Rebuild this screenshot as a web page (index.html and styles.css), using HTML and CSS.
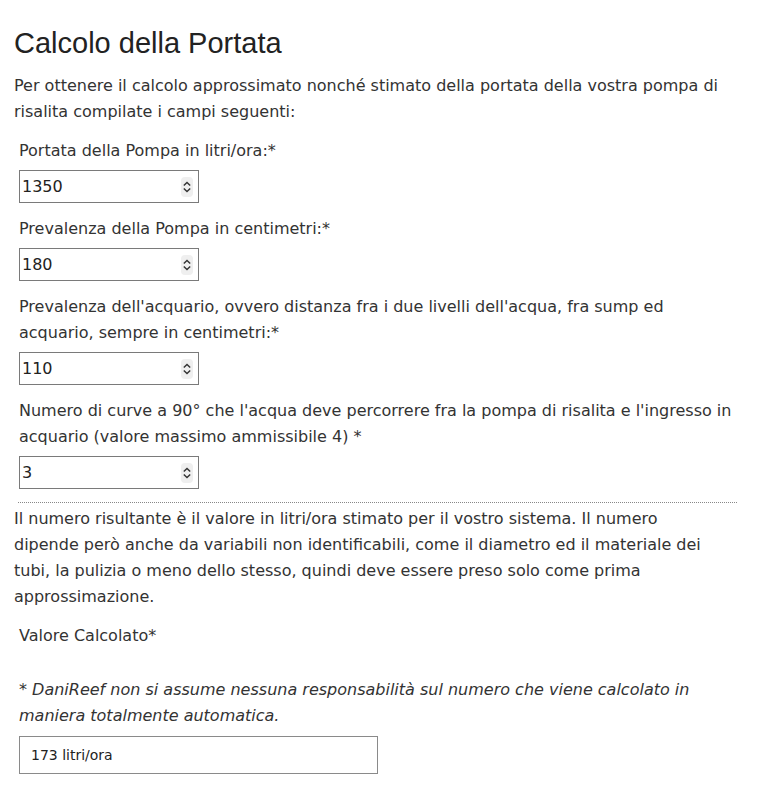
FILE: index.html
```html
<html>

<head>
	<title>Calcolo della Portata</title>
	<link rel="stylesheet" href="styles.css">
</head>

<body>
	<main class="page">
		<h1>Calcolo della Portata</h1>

		<p>Per ottenere il calcolo approssimato nonché stimato della portata della vostra pompa di risalita compilate i campi seguenti:</p>

		<form class="calc">
			<div class="group">
				<label for="Portata">Portata della Pompa in litri/ora:*</label>
				<div class="field">
					<input id="Portata" type="text" value="1350">
					<svg class="spin" width="12" height="20" viewBox="0 0 12 20"><rect width="12" height="20" rx="4" fill="#efefef"/><path d="M2.8 8.6 L6 5.4 L9.2 8.6 M2.8 11.4 L6 14.6 L9.2 11.4" fill="none" stroke="#333" stroke-width="1.4"/></svg>
				</div>
			</div>
			<div class="group">
				<label for="Prevalenza">Prevalenza della Pompa in centimetri:*</label>
				<div class="field">
					<input id="Prevalenza" type="text" value="180">
					<svg class="spin" width="12" height="20" viewBox="0 0 12 20"><rect width="12" height="20" rx="4" fill="#efefef"/><path d="M2.8 8.6 L6 5.4 L9.2 8.6 M2.8 11.4 L6 14.6 L9.2 11.4" fill="none" stroke="#333" stroke-width="1.4"/></svg>
				</div>
			</div>
			<div class="group">
				<label for="Acquario">Prevalenza dell'acquario, ovvero distanza fra i due livelli dell'acqua, fra sump ed acquario, sempre in centimetri:*</label>
				<div class="field">
					<input id="Acquario" type="text" value="110">
					<svg class="spin" width="12" height="20" viewBox="0 0 12 20"><rect width="12" height="20" rx="4" fill="#efefef"/><path d="M2.8 8.6 L6 5.4 L9.2 8.6 M2.8 11.4 L6 14.6 L9.2 11.4" fill="none" stroke="#333" stroke-width="1.4"/></svg>
				</div>
			</div>
			<div class="group">
				<label for="Curve">Numero di curve a 90° che l'acqua deve percorrere fra la pompa di risalita e l'ingresso in acquario (valore massimo ammissibile 4) *</label>
				<div class="field">
					<input id="Curve" type="text" value="3">
					<svg class="spin" width="12" height="20" viewBox="0 0 12 20"><rect width="12" height="20" rx="4" fill="#efefef"/><path d="M2.8 8.6 L6 5.4 L9.2 8.6 M2.8 11.4 L6 14.6 L9.2 11.4" fill="none" stroke="#333" stroke-width="1.4"/></svg>
				</div>
			</div>
			<hr>
		</form>

		<p class="note">Il numero risultante è il valore in litri/ora stimato per il vostro sistema. Il numero dipende però anche da variabili non identificabili, come il diametro ed il materiale dei tubi, la pulizia o meno dello stesso, quindi deve essere preso solo come prima approssimazione.</p>

		<div class="result">
			<p class="result-label">Valore Calcolato*</p>
			<p class="disclaimer">* DaniReef non si assume nessuna responsabilità sul numero che viene calcolato in maniera totalmente automatica.</p>
			<div class="output">173 litri/ora</div>
		</div>
	</main>
</body>

</html>
```

FILE: styles.css
```css
* {
	box-sizing: border-box;
}

body {
	margin: 0;
	background: #fff;
	font-family: "DejaVu Sans", Verdana, sans-serif;
	font-size: 16px;
	line-height: 26px;
	color: #333;
}

.page {
	width: 742px;
	padding: 27px 0 0 14px;
}

h1 {
	font-family: "Liberation Sans", Arial, sans-serif;
	font-weight: normal;
	font-size: 29px;
	line-height: 33px;
	color: #222;
	margin: 0 0 13px;
}

p {
	margin: 0;
}

.note {
	max-width: 712px;
}

.calc {
	margin: 13px 0 0 5px;
}

.group {
	margin-bottom: 13px;
}

.group label {
	display: block;
	margin-bottom: 6px;
}

.field {
	display: flex;
	align-items: center;
	width: 180px;
	height: 33px;
	border: 1px solid #7a7a7a;
	padding: 0 5px 0 2px;
}

.field input {
	flex: 1;
	min-width: 0;
	border: none;
	outline: none;
	padding: 0;
	font: inherit;
	color: #222;
	background: transparent;
}

.spin {
	flex-shrink: 0;
}

hr {
	border: none;
	border-top: 1px dotted #888;
	margin: 12px 5px 3px -1px;
}

.result {
	margin: 13px 0 0 5px;
}

.disclaimer {
	font-style: italic;
	margin: 28px 0 7px;
}

.output {
	width: 359px;
	height: 38px;
	border: 1px solid #8a8a8a;
	padding: 0 11px;
	font-size: 14px;
	line-height: 36px;
	color: #222;
}
```
